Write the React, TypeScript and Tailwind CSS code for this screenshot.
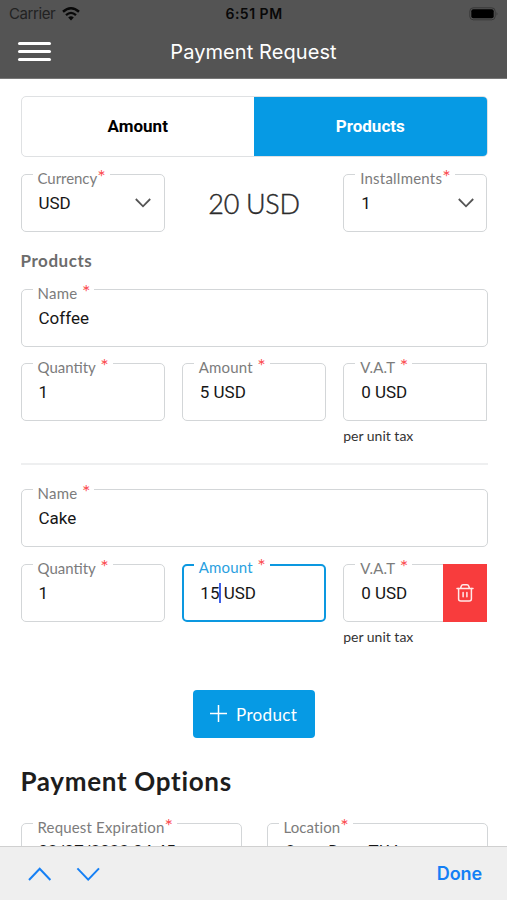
import React from "react";

type FieldProps = {
  label: string;
  value: React.ReactNode;
  tight?: boolean;
  focused?: boolean;
  select?: boolean;
  square?: boolean;
  raised?: boolean;
  tracking?: string;
  action?: React.ReactNode;
};

function Field({ label, value, tight, focused, select, square, raised, tracking = "", action }: FieldProps) {
  return (
    <div
      className={`relative flex h-[58px] w-full min-w-0 ${square ? "rounded-l-[5px]" : "rounded-[5px]"} ${
        focused ? "border-2 border-[#0c98e0] pl-[16.5px]" : "border border-[#d3d6d8] pl-[17px]"
      }`}
    >
      <span
        className={`absolute flex h-[20px] items-center whitespace-nowrap bg-white px-[5px] font-['Lato','Liberation_Sans',sans-serif] text-[15px] leading-[20px] ${
          focused ? "-top-[9px] left-[10px] text-[#2a9fe0]" : "-top-[7px] left-[11px] text-[#7c7c7c]"
        } ${tracking}`}
      >
        {label}
        <span className={`-mt-[5px] -mr-px text-[20px] tracking-normal text-[#fb4b50] ${tight ? "" : "ml-[4.5px]"}`}>*</span>
      </span>
      <span
        className={`flex h-[20px] flex-1 items-center whitespace-pre text-[17px] leading-[20px] text-[#161616] ${
          focused ? "mt-[17px]" : raised ? "mt-[17px]" : "mt-[18px]"
        }`}
      >
        {value}
      </span>
      {select && (
        <svg className="mt-[22px] mr-[11.5px] h-[12px] w-[18px]" viewBox="0 0 18 12" fill="none" stroke="#555" strokeWidth="1.8">
          <path d="M1.8 2 L9 9.3 L16.2 2" />
        </svg>
      )}
      {action}
    </div>
  );
}

function UnitTax() {
  return (
    <div className="mt-[5px] font-['Lato','Liberation_Sans',sans-serif] text-[14px] leading-[20px] text-[#333]">per unit tax</div>
  );
}

function TrashButton() {
  return (
    <div className="-my-px -mr-px flex w-[44px] items-center justify-center bg-[#f83c3d]">
      <svg width="18" height="20" viewBox="0 0 18 20" fill="none" stroke="#ffe9e9" strokeWidth="1.5" strokeLinecap="round" strokeLinejoin="round">
        <path d="M1 5.4H17M4.6 5.2L5.2 3.2Q5.7 1.8 7 1.8H11Q12.3 1.8 12.8 3.2L13.4 5.2" />
        <path d="M2.6 5.6V16Q2.6 18 4.8 18H13.2Q15.4 18 15.4 16V5.6M7.1 9.6V13.8M10.9 9.6V13.8" />
      </svg>
    </div>
  );
}

export default function App() {
  return (
    <div className="flex h-[900px] w-[507px] flex-col overflow-hidden bg-white font-['Roboto','Liberation_Sans',sans-serif]">
      <header className="h-[79px] shrink-0 border-b border-[#777] bg-[#545454] font-['Inter','Liberation_Sans',sans-serif]">
        <div className="grid h-[28px] grid-cols-[1fr_auto_1fr] items-center pr-[8px] pl-[9px]">
          <div className="flex items-center gap-[7px]">
            <span className="text-[15px] leading-[20px] tracking-[-0.42px] text-[#222]">Carrier</span>
            <svg width="18" height="14" viewBox="0 0 18 14" fill="none" stroke="#080808">
              <path d="M1 4.8Q9 -2.2 17 4.8" strokeWidth="2.5" />
              <path d="M4 8.1Q9 3.7 14 8.1" strokeWidth="2.3" />
              <path d="M6.2 10.5Q9 8 11.8 10.5L9 13.4Z" fill="#080808" stroke="none" />
            </svg>
          </div>
          <span className="text-[14px] leading-[20px] font-semibold tracking-[0.5px] text-[#080808]">6:51 PM</span>
          <div className="flex justify-end">
            <svg width="30" height="14" viewBox="0 0 30 14">
              <rect x="0.8" y="0.8" width="25.4" height="12" rx="3.5" fill="none" stroke="#383838" />
              <rect x="2.3" y="2.3" width="22.4" height="9" rx="2" fill="#000" />
              <path d="M27.6 4.8Q29.2 6.8 27.6 8.8Z" fill="#333" />
            </svg>
          </div>
        </div>
        <div className="grid h-[48px] grid-cols-[1fr_auto_1fr] items-center px-[18px]">
          <div className="flex flex-col gap-[5px] pb-[1px]">
            <div className="h-[3px] w-[33px] rounded-full bg-white" />
            <div className="h-[3px] w-[33px] rounded-full bg-white" />
            <div className="h-[3px] w-[33px] rounded-full bg-white" />
          </div>
          <h1 className="text-[20px] leading-[24px] font-normal tracking-[0.08px] text-white">Payment Request</h1>
        </div>
      </header>

      <main className="flex min-h-0 flex-1 flex-col overflow-hidden pt-[17px] pr-[19.5px] pl-[20.5px]">
        <div className="flex h-[61px] shrink-0 overflow-hidden rounded-[5px] border border-[#dfe1e3] text-[17px] font-bold">
          <div className="flex w-[232.5px] items-center justify-center text-black">Amount</div>
          <div className="flex flex-1 items-center justify-center bg-[#069ae4] text-white">Products</div>
        </div>

        <div className="mt-[17px] grid shrink-0 grid-cols-3 gap-[17px]">
          <Field label="Currency" value="USD" tight select tracking="tracking-[-0.05px]" />
          <div className="flex items-center justify-center pt-[2px] font-['Lato','Liberation_Sans',sans-serif] text-[27px] font-light tracking-[-0.3px] text-[#2b2b2b] [-webkit-text-stroke:0.4px_#2b2b2b]">
            20 USD
          </div>
          <Field label="Installments" value="1" tight select tracking="tracking-[0.23px]" />
        </div>

        <h2 className="mt-[17px] shrink-0 font-['Lato','Liberation_Sans',sans-serif] text-[17px] leading-[24px] font-bold tracking-[0.55px] text-[#6c6c6c]">
          Products
        </h2>
        <div className="mt-[16px] shrink-0">
          <Field label="Name" value="Coffee" tracking="tracking-[0.25px]" />
        </div>
        <div className="mt-[16px] grid shrink-0 grid-cols-3 gap-[17px]">
          <Field label="Quantity" value="1" />
          <Field label="Amount" value="5 USD" tracking="tracking-[0.15px]" />
          <div>
            <Field label="V.A.T" value="0 USD" square tracking="tracking-[0.2px]" />
            <UnitTax />
          </div>
        </div>

        <div className="mt-[17px] h-[2px] shrink-0 bg-[#eeeff0]" />

        <div className="mt-[24px] shrink-0">
          <Field label="Name" value="Cake" tracking="tracking-[0.25px]" />
        </div>
        <div className="mt-[17px] grid shrink-0 grid-cols-3 gap-[17px]">
          <Field label="Quantity" value="1" />
          <Field
            label="Amount"
            focused
            tracking="tracking-[0.15px]"
            value={
              <>
                15<span className="-mr-[2px] h-[20px] w-[2px] bg-[#3d5fe8]" /> USD
              </>
            }
          />
          <div>
            <Field label="V.A.T" value="0 USD" square tracking="tracking-[0.2px]" action={<TrashButton />} />
            <UnitTax />
          </div>
        </div>

        <button className="mt-[43px] ml-[172.5px] flex h-[48px] w-[122px] shrink-0 items-center rounded-[4px] bg-[#069ae4] pl-[17px] font-['Lato','Liberation_Sans',sans-serif] text-[17px] tracking-[0.35px] text-white">
          <svg className="mr-[9px] mb-[2px]" width="17" height="17" viewBox="0 0 17 17" stroke="#fff" strokeWidth="1.5">
            <path d="M8.5 0V17M0 8.5H17" />
          </svg>
          <span className="pt-[1px]">Product</span>
        </button>

        <h2 className="mt-[27px] shrink-0 font-['Lato','Liberation_Sans',sans-serif] text-[26px] leading-[32px] font-bold tracking-[0.68px] text-[#1d1d1d]">
          Payment Options
        </h2>
        <div className="mt-[26px] grid shrink-0 grid-cols-2 gap-[25px]">
          <Field label="Request Expiration" value="02/07/2022 04:45" tight raised tracking="tracking-[0.17px]" />
          <Field label="Location" value="Open Door TLV" tight raised tracking="tracking-[0.1px]" />
        </div>
      </main>

      <footer className="flex h-[54px] shrink-0 items-center justify-between border-t border-[#d0d0d0] bg-[#efefef] pr-[25px] pl-[28px]">
        <svg width="72" height="14" viewBox="0 0 72 14" fill="none" stroke="#1680f5" strokeWidth="2">
          <path d="M1 13L11.7 1.8L22.4 13M49.4 1.4L60.2 12.6L71 1.4" />
        </svg>
        <span className="font-['Inter','Liberation_Sans',sans-serif] text-[18px] font-semibold tracking-[-0.1px] text-[#147ff5]">Done</span>
      </footer>
    </div>
  );
}
